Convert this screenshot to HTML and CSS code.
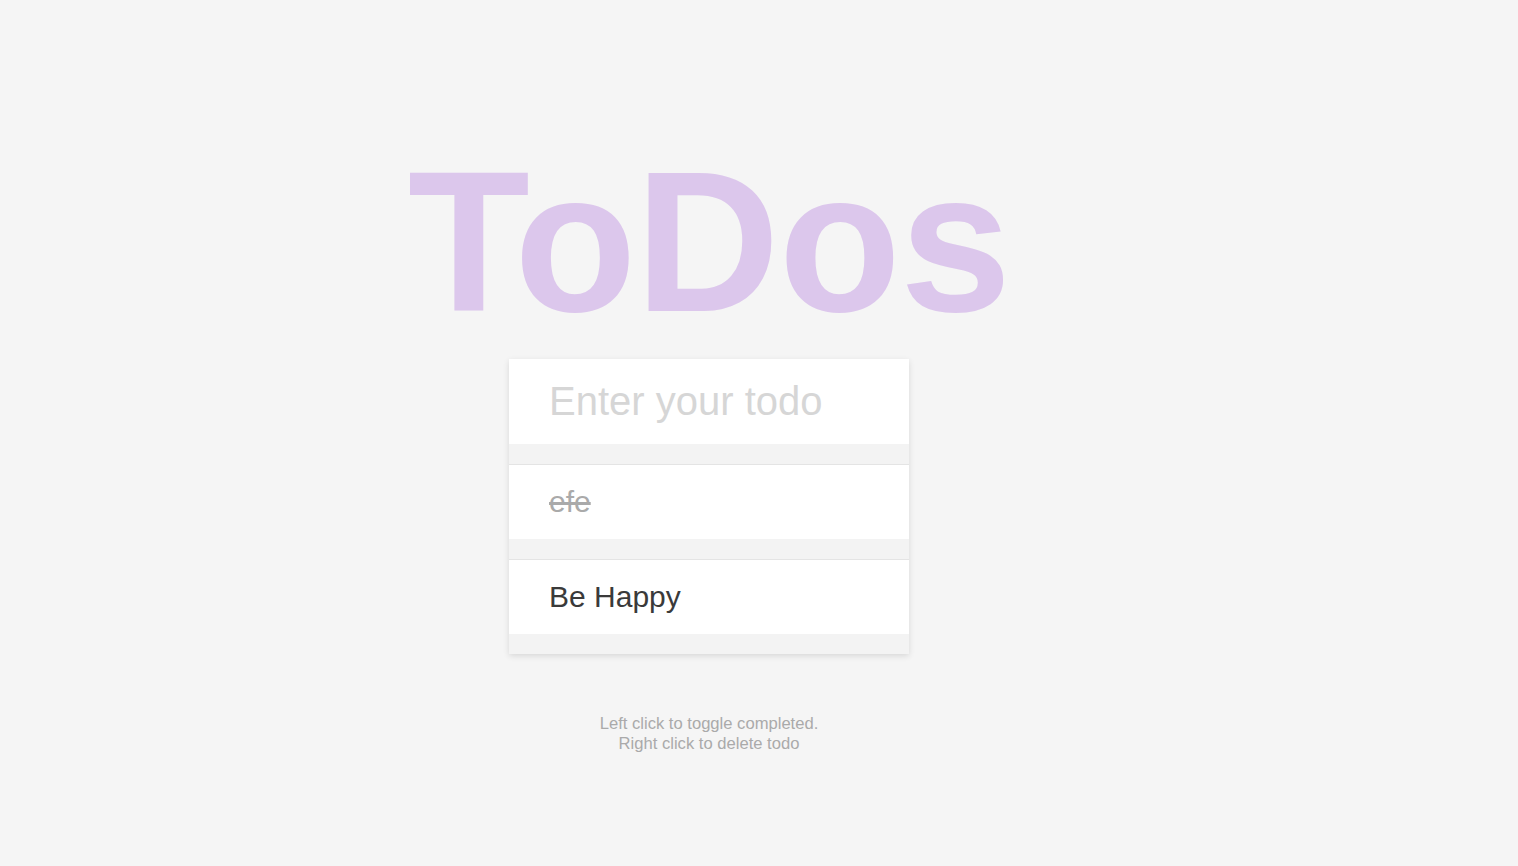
FILE: index.html
```html
<!DOCTYPE html>
<html lang="en">
<head>
<meta charset="utf-8">
<title>ToDos</title>
<link rel="stylesheet" href="styles.css">
</head>
<body>
<div class="page">
  <h1 class="title">ToDos</h1>
  <div class="card">
    <form class="entry">
      <input class="entry-input" type="text" placeholder="Enter your todo">
    </form>
    <ul class="list">
      <li class="item item-done">efe</li>
      <li class="item">Be Happy</li>
    </ul>
  </div>
  <p class="hint">Left click to toggle completed.<br>Right click to delete todo</p>
</div>
</body>
</html>
```

FILE: styles.css
```css
html, body {
  margin: 0;
  padding: 0;
  background: #f5f5f5;
}

body {
  font-family: "Liberation Sans", Arial, sans-serif;
}

.page {
  display: flex;
  flex-direction: column;
  align-items: center;
  padding: 142px 100px 0 0;
}

.title {
  margin: 0 0 17px;
  font-size: 200px;
  line-height: 200px;
  font-weight: 700;
  letter-spacing: -1px;
  color: #dcc7ec;
}

.card {
  width: 400px;
  background: #f3f3f3;
  box-shadow: 0 2px 6px rgba(0, 0, 0, 0.12);
}

.entry {
  margin: 0;
}

.entry-input {
  display: block;
  box-sizing: border-box;
  width: 100%;
  height: 85px;
  margin: 0;
  padding: 0 40px;
  border: 0;
  outline: none;
  background: #fff;
  font-family: "Liberation Sans", Arial, sans-serif;
  font-size: 40px;
  color: #333;
}

.entry-input::placeholder {
  color: #d6d6d6;
}

.list {
  list-style: none;
  margin: 0;
  padding: 0 0 20px;
}

.item {
  margin-top: 20px;
  border-top: 1px solid #e4e4e4;
  background: #fff;
  padding: 20px 40px;
  font-size: 30px;
  color: #3a3a3a;
  cursor: pointer;
}

.item-done {
  color: #aaaaaa;
  text-decoration: line-through;
}

.hint {
  margin: 60px 0 0;
  font-size: 16.6px;
  line-height: 20px;
  color: #aaaaaa;
  text-align: center;
}
```
